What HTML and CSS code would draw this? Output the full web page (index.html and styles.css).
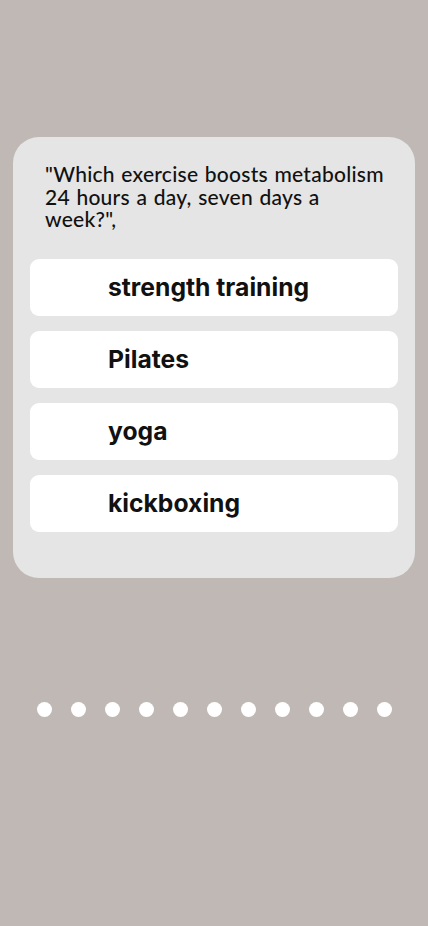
FILE: index.html
```html
<!DOCTYPE html>
<html>
<head>
<meta charset="utf-8">
<link rel="stylesheet" href="styles.css">
</head>
<body>
<main class="screen">
  <section class="card">
    <p class="question">"Which exercise boosts metabolism 24 hours a day, seven days a week?",</p>
    <div class="options">
      <div class="option">strength training</div>
      <div class="option">Pilates</div>
      <div class="option">yoga</div>
      <div class="option">kickboxing</div>
    </div>
  </section>
  <nav class="dots">
    <span class="dot"></span><span class="dot"></span><span class="dot"></span><span class="dot"></span><span class="dot"></span><span class="dot"></span><span class="dot"></span><span class="dot"></span><span class="dot"></span><span class="dot"></span><span class="dot"></span>
  </nav>
</main>
</body>
</html>
```
FILE: styles.css
```css
html, body {
  margin: 0;
  padding: 0;
  background: #bfb8b5;
}
.screen {
  width: 428px;
  height: 926px;
  padding-top: 137px;
  box-sizing: border-box;
}
.card {
  margin: 0 13px;
  background: #e5e5e5;
  border-radius: 26px;
  padding: 26px 17px 46px;
}
.question {
  margin: 0 0 28px;
  padding: 0 12px 0 15px;
  font-family: "Lato", sans-serif;
  font-weight: 500;
  font-size: 21px;
  line-height: 22.5px;
  letter-spacing: 0.25px;
  word-spacing: 1px;
  color: #111;
}
.options {
  display: flex;
  flex-direction: column;
  gap: 15px;
}
.option {
  height: 57px;
  background: #fff;
  border-radius: 9px;
  display: flex;
  align-items: center;
  padding-left: 78px;
  font-family: "Inter", sans-serif;
  font-weight: 700;
  font-size: 24.7px;
  color: #111;
}
.dots {
  display: flex;
  justify-content: center;
  gap: 19px;
  margin-top: 124px;
}
.dot {
  width: 15px;
  height: 15px;
  border-radius: 50%;
  background: #fff;
}
```
